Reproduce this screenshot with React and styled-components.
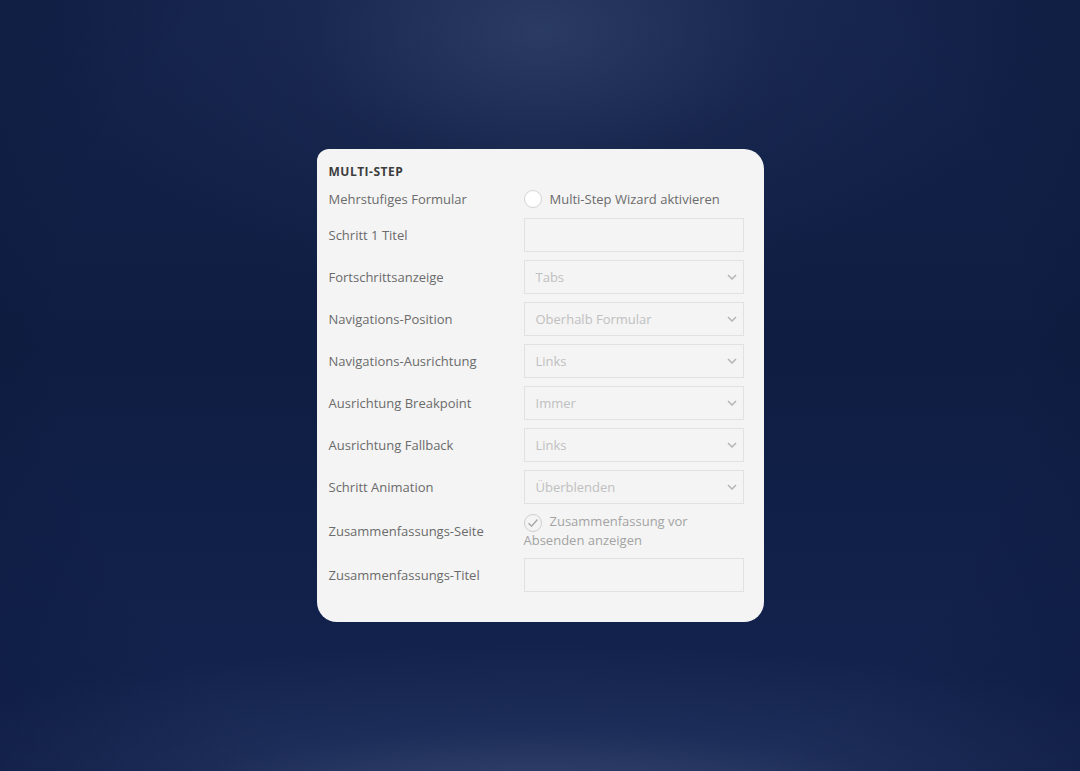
import React from "react";
import styled, { createGlobalStyle } from "styled-components";

const GlobalStyle = createGlobalStyle`
  html, body {
    margin: 0;
    padding: 0;
    height: 100%;
  }
  body {
    font-family: "Open Sans", "Liberation Sans", sans-serif;
  }
`;

const Page = styled.div`
  width: 1080px;
  height: 771px;
  display: flex;
  align-items: flex-start;
  justify-content: center;
  padding-top: 149px;
  box-sizing: border-box;
  background:
    radial-gradient(ellipse 80% 110% at 50% 45%, rgba(6, 14, 40, 0) 55%, rgba(6, 14, 40, 0.4) 100%),
    radial-gradient(ellipse 480px 280px at 50% 4%, rgba(62, 80, 120, 0.55) 0%, rgba(40, 56, 96, 0.25) 50%, rgba(20, 34, 70, 0) 100%),
    radial-gradient(ellipse 760px 190px at 50% 108%, rgba(82, 98, 136, 0.7) 0%, rgba(48, 64, 108, 0.35) 55%, rgba(20, 34, 70, 0) 100%),
    linear-gradient(180deg, #13224a 0%, #0f1d42 45%, #132450 100%);
`;

const Card = styled.div`
  width: 447px;
  box-sizing: border-box;
  padding: 14px 20px 30px 12px;
  background: #f4f4f4;
  border-radius: 12px 20px 20px 20px;
  display: grid;
  grid-template-columns: 195px 220px;
  row-gap: 8px;
  align-items: center;
`;

const Heading = styled.h3`
  grid-column: 1 / -1;
  margin: 0;
  font-size: 12px;
  line-height: 17px;
  font-weight: 700;
  color: #3d3d3d;
  letter-spacing: 0.5px;
`;

const Label = styled.label`
  font-size: 13px;
  color: #6b6b6b;
  line-height: 19px;
`;

const Field = styled.div`
  height: 34px;
  box-sizing: border-box;
  border: 1px solid #e1e1e1;
  background: #f4f4f4;
  display: flex;
  align-items: center;
  justify-content: space-between;
  padding: 0 6px 0 11px;
  font-size: 13px;
  color: #c0c0c0;
`;

const Chevron = () => (
  <svg width="10" height="6" viewBox="0 0 10 6" fill="none">
    <path d="M1 1l4 4 4-4" stroke="#b4b4b4" strokeWidth="1.5" />
  </svg>
);

const Toggle = styled.div`
  display: flex;
  align-items: center;
  gap: 8px;
  height: 22px;
  font-size: 13px;
  color: #6b6b6b;
`;

const Circle = styled.span`
  display: inline-flex;
  align-items: center;
  justify-content: center;
  width: 18px;
  height: 18px;
  box-sizing: border-box;
  border-radius: 50%;
  border: 1px solid ${(p) => (p.checked ? "#cfcfcf" : "#d4d4d4")};
  background: ${(p) => (p.checked ? "#f4f4f4" : "#ffffff")};
  vertical-align: -2px;
  margin: ${(p) => (p.inline ? "-5px 8px -1px 0" : "0")};
`;

const Wrapped = styled.div`
  font-size: 13px;
  line-height: 19px;
  color: #a3a3a3;
`;

const Check = () => (
  <svg width="12" height="10" viewBox="0 0 12 10" fill="none">
    <path d="M1.5 5.2l3 3L10.5 1.5" stroke="#a8a8a8" strokeWidth="1.4" />
  </svg>
);

const selects = [
  ["Fortschrittsanzeige", "Tabs"],
  ["Navigations-Position", "Oberhalb Formular"],
  ["Navigations-Ausrichtung", "Links"],
  ["Ausrichtung Breakpoint", "Immer"],
  ["Ausrichtung Fallback", "Links"],
  ["Schritt Animation", "Überblenden"],
];

export default function App() {
  return (
    <>
      <GlobalStyle />
      <Page>
        <Card>
          <Heading>MULTI-STEP</Heading>

          <Label>Mehrstufiges Formular</Label>
          <Toggle>
            <Circle />
            Multi-Step Wizard aktivieren
          </Toggle>

          <Label>Schritt 1 Titel</Label>
          <Field />

          {selects.map(([label, value]) => (
            <React.Fragment key={label}>
              <Label>{label}</Label>
              <Field>
                {value}
                <Chevron />
              </Field>
            </React.Fragment>
          ))}

          <Label>Zusammenfassungs-Seite</Label>
          <Wrapped>
            <Circle checked inline>
              <Check />
            </Circle>
            Zusammenfassung vor Absenden anzeigen
          </Wrapped>

          <Label>Zusammenfassungs-Titel</Label>
          <Field />
        </Card>
      </Page>
    </>
  );
}
